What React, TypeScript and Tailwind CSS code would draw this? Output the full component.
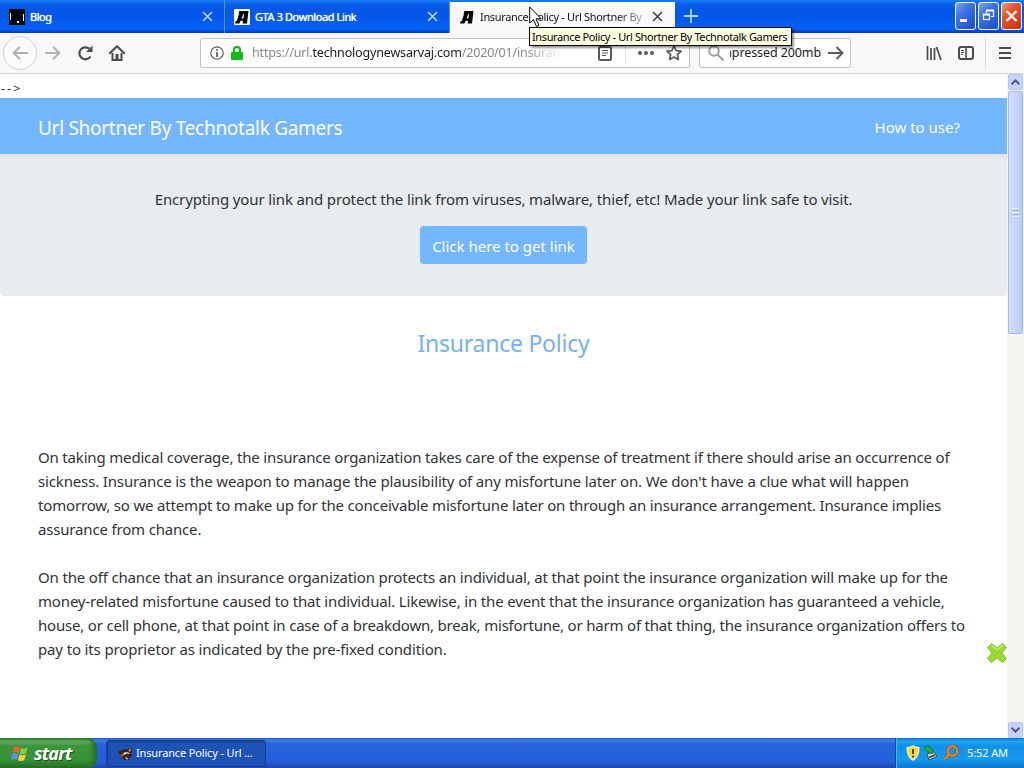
import React from 'react';

type TabProps = {
  title: string;
  icon: React.ReactNode;
  active?: boolean;
  titleClass?: string;
};

const CloseMark: React.FC<{ color: string }> = ({ color }) => (
  <svg width="11" height="11" viewBox="0 0 11 11" fill="none" stroke={color} strokeWidth="1.6">
    <path d="M1 1l9 9M10 1l-9 9" />
  </svg>
);

const BlogIcon = () => (
  <svg width="16" height="16" viewBox="0 0 16 16">
    <rect width="16" height="16" fill="#000" />
    <path d="M1.5 4v7M14.5 5v7" stroke="#fff" strokeWidth="1" />
    <rect x="8" y="12" width="2" height="2" fill="#fff" />
  </svg>
);

const LetterIcon: React.FC<{ boxed?: boolean }> = ({ boxed }) => (
  <svg width="16" height="16" viewBox="0 0 16 16">
    {boxed && <rect width="16" height="16" rx="1" fill="#fff" />}
    <path fillRule="evenodd" d="M5.500 2h9L13 14.500H8.700l.3-2.700H6.500L5.500 14.500H1l.8-2.500h1L5.200 4.500h-.7zM9.300 5L7.500 9.500h1.900l.6-4.500z" fill="#000" />
  </svg>
);

const Tab: React.FC<TabProps> = ({ title, icon, active, titleClass }) => (
  <div
    className={`flex items-center w-[225px] pl-[9px] pr-[11px] border-r ${
      active ? 'bg-[#f9f9fb] text-[#111] border-transparent mt-[2px] pb-[2px]' : 'text-white border-[#4d92f5] pt-[2px] pb-[2px]'
    }`}
  >
    {icon}
    <span className={`ml-[5px] flex-1 whitespace-nowrap text-[11px] leading-4 ${titleClass ?? ''}`}>{title}</span>
    <span className="ml-[10px]">
      <CloseMark color={active ? '#444' : '#b5dcff'} />
    </span>
  </div>
);

const TabStrip = () => (
  <div className="flex h-[33px] bg-[linear-gradient(180deg,#1c7bf2_0px,#0a63ee_4px,#0456e6_9px,#0559ec_20px,#0560f5_29px,#0049cf_31px,#003da8_33px)]">
    <Tab title="Blog" icon={<BlogIcon />} titleClass="tracking-[-0.5px] [text-shadow:0_0_1px_#fff]" />
    <Tab title="GTA 3 Download Link" icon={<LetterIcon boxed />} titleClass="tracking-[-0.4px] [text-shadow:0_0_1px_#fff]" />
    <Tab
      title="Insurance Policy - Url Shortner By"
      icon={<LetterIcon />}
      active
      titleClass="tracking-[-0.33px] [mask-image:linear-gradient(90deg,#000_84%,#0005)]"
    />
    <div className="flex flex-1 pl-[9px]">
      <svg className="mt-[9px]" width="14" height="14" viewBox="0 0 14 14" stroke="#a8d8ff" strokeWidth="1.8">
        <path d="M7 0v14M0 7h14" />
      </svg>
    </div>
    <div className="flex gap-[2px] pt-[2px] pr-[2px]">
      <WindowButton kind="min" />
      <WindowButton kind="restore" />
      <WindowButton kind="close" />
    </div>
  </div>
);

const WindowButton: React.FC<{ kind: 'min' | 'restore' | 'close' }> = ({ kind }) => (
  <button
    className={`flex h-7 w-[21px] items-center justify-center rounded-[3px] border border-white ${
      kind === 'close'
        ? 'bg-[linear-gradient(135deg,#f0a088,#e2552f_35%,#d8431c_70%,#b93510)]'
        : 'bg-[linear-gradient(135deg,#7fa5f5,#3f73e6_35%,#2a5ddd_70%,#1d49bd)]'
    }`}
  >
    <svg width="19" height="26" viewBox="0 0 19 26" fill="none" stroke="#fff">
      {kind === 'min' && <path d="M4 17.500h7" strokeWidth="3" />}
      {kind === 'restore' && (
        <>
          <path d="M7.500 10V7.500h7v6H12" strokeWidth="1.200" />
          <path d="M7 7.500h8" strokeWidth="2" />
          <rect x="4.500" y="11.500" width="6" height="5" strokeWidth="1.200" />
          <path d="M4 11.500h7" strokeWidth="2" />
        </>
      )}
      {kind === 'close' && <path d="M4.500 8l10 10M14.500 8l-10 10" strokeWidth="2.200" />}
    </svg>
  </button>
);

const Toolbar = () => (
  <div className="flex h-[41px] items-center border-b border-[#d6d6d8] bg-[#f8f8fa]">
    <div className="ml-[3px] flex size-[34px] items-center justify-center rounded-full border border-[#d0d0d2] bg-[#fbfbfc]">
      <svg width="16" height="14" viewBox="0 0 16 14" fill="none" stroke="#b0b0b0" strokeWidth="2">
        <path d="M16 7H1.500M8 .8L1.600 7 8 13.200" />
      </svg>
    </div>
    <svg className="ml-2" width="16" height="14" viewBox="0 0 16 14" fill="none" stroke="#b3b3b3" strokeWidth="2">
      <path d="M0 7h14.500M8 .8L14.400 7 8 13.200" />
    </svg>
    <svg className="ml-4" width="17" height="16" viewBox="0 0 17 16" fill="none" stroke="#4b4b4d" strokeWidth="2.200">
      <path d="M13.500 11.500A6 6 0 1 1 12.300 3.700" />
      <path d="M15.500 .5V7H9z" fill="#4b4b4d" stroke="none" />
    </svg>
    <svg className="ml-[15px]" width="16" height="16" viewBox="0 0 16 16">
      <path d="M.8 8.300L8 1.200l7.200 7.100" fill="none" stroke="#4b4b4d" strokeWidth="2" strokeLinecap="round" />
      <path d="M3.500 8v7h9V8" fill="none" stroke="#4b4b4d" strokeWidth="2" />
      <path d="M6.500 9h3v6h-3z" fill="#4b4b4d" />
    </svg>

    {/* Address bar */}
    <div className="ml-[75px] flex h-[30px] w-[490px] items-center rounded-[2px] border border-[#c3c3c5] bg-white pl-[9px]">
      <svg width="14" height="14" viewBox="0 0 14 14" fill="none" stroke="#5c5c5e">
        <circle cx="7" cy="7" r="6.200" strokeWidth="1.200" />
        <path d="M7 3v1.800M7 6v5" strokeWidth="1.700" />
      </svg>
      <svg className="ml-[7px]" width="12" height="14" viewBox="0 0 12 14">
        <path d="M3 7V4a3 3 0 0 1 6 0v3" fill="none" stroke="#12bc12" strokeWidth="2.200" />
        <rect y="6" width="12" height="8" rx="1" fill="#12bc12" />
      </svg>
      <div className="ml-[9px] w-[310px] pt-px whitespace-nowrap text-[12.500px] tracking-[-0.17px] text-[#88888a] [mask-image:linear-gradient(90deg,#000_88%,transparent)]">
        https://url.<span className="text-[#1a1a1a]">technologynewsarvaj.com</span>/2020/01/insuran
      </div>
      <svg className="ml-[36px]" width="14" height="15" viewBox="0 0 14 15" fill="none" stroke="#5a5a5c">
        <rect x="1" y="1" width="12" height="13" rx="1.500" strokeWidth="2" />
        <path d="M4 4.500h6M4 7h6M4 9.500h4" />
      </svg>
      <div className="ml-[13px] h-[22px] w-px bg-[#e4e4e6]" />
      <svg className="ml-[12px]" width="16" height="4" viewBox="0 0 16 4" fill="#5a5a5c">
        <circle cx="2" cy="2" r="2" />
        <circle cx="8" cy="2" r="2" />
        <circle cx="14" cy="2" r="2" />
      </svg>
      <svg className="ml-[12px]" width="16" height="16" viewBox="0 0 16 16" fill="none" stroke="#5a5a5c" strokeWidth="1.700" strokeLinejoin="round">
        <path d="M8 1l2.100 4.600 5 .5-3.700 3.400 1 4.900L8 12l-4.400 2.400 1-4.900L.9 6.100l5-.5z" />
      </svg>
    </div>

    {/* Search box */}
    <div className="ml-[9px] flex h-[30px] w-[152px] items-center rounded-[2px] border border-[#c3c3c5] bg-white pl-[8px]">
      <svg width="16" height="16" viewBox="0 0 16 16" fill="none" stroke="#a0a0a2" strokeWidth="2">
        <circle cx="6" cy="6" r="4.800" />
        <path d="M9.500 9.500l6 6" />
      </svg>
      <div className="ml-[6px] flex w-[91px] justify-end overflow-hidden pt-px whitespace-nowrap text-[12.500px] tracking-[-0.1px] text-[#1a1a1a]">mpressed 200mb</div>
      <svg className="ml-[7px]" width="16" height="14" viewBox="0 0 16 14" fill="none" stroke="#5c5c5e" strokeWidth="2">
        <path d="M0 7h14.500M8.500 1l6 6-6 6" />
      </svg>
    </div>

    <svg className="ml-[75px]" width="16" height="14" viewBox="0 0 16 14" fill="none" stroke="#4b4b4d" strokeWidth="2">
      <path d="M1.500 0v14M5 2v12M8.500 2v12M10.500 1l4.500 13" strokeWidth="1.700" />
    </svg>
    <svg className="ml-4" width="16" height="14" viewBox="0 0 16 14" fill="none" stroke="#4b4b4d">
      <rect x="1" y="1" width="14" height="12" rx="2" strokeWidth="2" />
      <path d="M8 1v12" strokeWidth="1.600" />
      <path d="M3 4.500h3M3 6.500h3M3 8.500h2" />
    </svg>
    <div className="ml-[11px] h-[34px] w-px bg-[#dededf]" />
    <svg className="ml-[13px]" width="12" height="12" viewBox="0 0 12 12" stroke="#4b4b4d" strokeWidth="2">
      <path d="M0 1h12M0 6h12M0 11h12" />
    </svg>
  </div>
);

const ScrollArrow: React.FC<{ down?: boolean }> = ({ down }) => (
  <div className="flex h-[16px] w-[15px] items-center justify-center rounded-[2px] border border-[#b4c8f6] bg-[#c6d4fc]">
    <svg width="9" height="6" viewBox="0 0 9 6" fill="none" stroke="#43568c" strokeWidth="2">
      <path d={down ? 'M.7 .8l3.800 3.800L8.300 .8' : 'M.7 5.200l3.800-3.800 3.800 3.800'} />
    </svg>
  </div>
);

const Scrollbar = () => (
  <div className="flex w-[17px] flex-col items-center bg-[#f6f6f1]">
    <ScrollArrow />
    <div className="mt-px flex h-[243px] w-[15px] flex-col items-center justify-center gap-px rounded-[2px] border border-[#a3b8ee] bg-[linear-gradient(90deg,#cfdcff,#c6d4fc_60%,#b9caf7)]">
      <i className="h-px w-[7px] bg-[#eef4fe]" />
      <i className="h-px w-[7px] bg-[#8cb0f8]" />
      <i className="h-px w-[7px] bg-[#eef4fe]" />
      <i className="h-px w-[7px] bg-[#8cb0f8]" />
      <i className="h-px w-[7px] bg-[#eef4fe]" />
    </div>
    <div className="flex-1" />
    <ScrollArrow down />
  </div>
);

const Page = () => (
  <div className="w-[1007px] bg-white text-[15px] leading-6 text-[#2f3337]">
    <div className="h-6 pt-[2px] pl-px text-[13px] tracking-[1.8px]">{'-->'}</div>
    <nav className="flex h-14 items-center justify-between bg-[#74b6ff] pr-[47px] pl-[38px] text-white">
      <span className="pt-[3px] text-[19px] tracking-[-0.28px] whitespace-nowrap">Url Shortner By Technotalk Gamers</span>
      <a href="#how" className="pt-[2px] whitespace-nowrap">How to use?</a>
    </nav>
    <section className="flex h-[142px] flex-col items-center rounded-b-[4px] bg-[#e8ecee] bg-[linear-gradient(180deg,#e2e3e6,#e8ecee_8px)] pt-[33px]">
      <p className="tracking-[-0.13px] whitespace-nowrap">Encrypting your link and protect the link from viruses, malware, thief, etc! Made your link safe to visit.</p>
      <button className="mt-[15px] h-[38px] w-[167px] rounded-[4px] bg-[#74b6ff] pt-[2px] whitespace-nowrap text-white">Click here to get link</button>
    </section>
    <h2 className="mt-[33px] text-center text-[23px] leading-[29px] tracking-[-0.25px] text-[#74b1f0]">Insurance Policy</h2>
    <article className="mt-[87px] ml-[38px] whitespace-nowrap">
      <p className="tracking-[-0.175px]">
        On taking medical coverage, the insurance organization takes care of the expense of treatment if there should arise an occurrence of
        <br />
        <span className="tracking-[-0.148px]">
          sickness. Insurance is the weapon to manage the plausibility of any misfortune later on. We don't have a clue what will happen
        </span>
        <br />
        tomorrow, so we attempt to make up for the conceivable misfortune later on through an insurance arrangement. Insurance implies
        <br />
        assurance from chance.
      </p>
      <p className="mt-6 tracking-[-0.165px]">
        On the off chance that an insurance organization protects an individual, at that point the insurance organization will make up for the
        <br />
        money-related misfortune caused to that individual. Likewise, in the event that the insurance organization has guaranteed a vehicle,
        <br />
        <span className="tracking-[-0.197px]">
          house, or cell phone, at that point in case of a breakdown, break, misfortune, or harm of that thing, the insurance organization offers to
        </span>
        <br />
        <span className="tracking-[-0.14px]">pay to its proprietor as indicated by the pre-fixed condition.</span>
      </p>
    </article>
  </div>
);

const Taskbar = () => (
  <div className="flex h-[30px] bg-[linear-gradient(180deg,#1f4fb8_0px,#3b80ee_2px,#2763dc_6px,#245edb_24px,#1b46a8_30px)] text-white">
    <button className="flex w-[97px] items-center rounded-r-[9px] bg-[linear-gradient(180deg,#2c7a2c_0px,#68b268_3px,#3c943c_8px,#379337_22px,#266f26_30px)] pl-[11px] shadow-[inset_-4px_0_5px_#266c26]">
      <svg width="18" height="17" viewBox="0 0 18 17">
        <path d="M3 2c2-1 4-1 6 .3L7.600 8C5.500 6.800 3.500 6.900 1.400 7.700z" fill="#f0602c" />
        <path d="M10 2.700c2 1.100 4.300 1.100 6.600.1L15 8.500c-2 .9-4.200.9-6.300-.1z" fill="#8acb43" />
        <path d="M1.200 8.800c2.100-.9 4-.9 6.100.3L5.800 15C4 13.800 2 13.900-.2 14.700z" fill="#5b91ef" />
        <path d="M8.400 9.500c2.100 1 4.200 1 6.300.1l-1.500 5.700c-2.100.9-4.200.9-6.200-.1z" fill="#fbd03c" />
      </svg>
      <span className="ml-[5px] text-[18px] leading-none font-bold italic tracking-[-0.8px] [text-shadow:1px_1px_1px_#1c4c1c]">start</span>
    </button>
    <div className="mt-[2px] ml-[9px] flex h-[27px] w-[160px] items-center rounded-[3px] border border-[#173f98] bg-[#1e52b7] pl-[11px] shadow-[inset_1px_1px_2px_#153e8e]">
      <svg width="16" height="14" viewBox="0 0 16 14">
        <path d="M0 4l4-.5L7 2l3 .5L13 0l1 4-1 3 2 2-3 1-1 3H7L4 11 3 8 0 6z" fill="#33231a" />
        <path d="M10.500 3L13 1v3l-2 1zM3 7l3 1-2 2z" fill="#e8762c" />
        <path d="M5 6l3-1 4 1-1 1-2-.5L6 8zM7 10l3 1-1 2z" fill="#f4d9ae" />
      </svg>
      <span className="ml-[2px] text-[11px] tracking-[-0.15px] whitespace-nowrap">Insurance Policy - Url ...</span>
    </div>
    <div className="flex-1" />
    <div className="flex w-[129px] items-center border-l border-[#0b4aa8] bg-[linear-gradient(180deg,#0d6ad0_0px,#1ba5f5_3px,#1290e8_8px,#129bf0_22px,#0f73c8_30px)] pl-[10px] shadow-[inset_1px_0_1px_#4cc0fb]">
      <svg width="14" height="16" viewBox="0 0 14 16">
        <path d="M7 .8c2 1.500 4 1.800 6 1.800 0 5.500-1 9.800-6 12.600C2 12.400 1 8.100 1 2.600c2 0 4-.3 6-1.800z" fill="#f7dc22" stroke="#e4e9da" strokeWidth="1.300" />
        <path d="M7 4v5M7 10.500v2" stroke="#222" strokeWidth="1.600" />
      </svg>
      <svg className="ml-[4px]" width="15" height="16" viewBox="0 0 15 16">
        <path d="M3 9l2 6 8-3.500L10 7z" fill="#c9d3d0" stroke="#36504c" />
        <path d="M5 12.500l6-2.500" stroke="#3b4444" strokeWidth="1.500" />
        <path d="M0 2.500L5 0v2l4 2-.5 4.500L5 7v2z" fill="#23a83c" stroke="#126d2b" strokeWidth=".7" />
      </svg>
      <svg className="ml-[4px]" width="16" height="16" viewBox="0 0 16 16" fill="none">
        <circle cx="9.500" cy="6" r="4.700" stroke="#a74b0b" strokeWidth="3" />
        <path d="M6 9.500L1.500 14" stroke="#a74b0b" strokeWidth="3.400" />
        <circle cx="9.500" cy="6" r="4.700" stroke="#f0862a" strokeWidth="2" />
        <path d="M6 9.500L1.500 14" stroke="#f0862a" strokeWidth="2" />
      </svg>
      <span className="ml-[8px] text-[11px] tracking-[-0.1px] whitespace-nowrap">5:52 AM</span>
    </div>
  </div>
);

const App: React.FC = () => (
  <div className="relative flex h-[768px] w-[1024px] flex-col overflow-hidden bg-white font-['Noto_Sans',sans-serif]">
    <TabStrip />
    <Toolbar />
    <main className="flex min-h-0 flex-1">
      <Page />
      <Scrollbar />
    </main>
    <Taskbar />

    {/* Floating close badge */}
    <svg className="absolute top-[642px] left-[986px]" width="22" height="22" viewBox="0 0 22 22">
      <path d="M5.500 1.500L11 6l5.500-4.500 4 4L16 11l4.500 5.500-4 4L11 16l-5.500 4.500-4-4L6 11 1.500 5.500z" fill="#9bd834" stroke="#82c52e" strokeLinejoin="round" />
      <path d="M5.500 3.500L11 8l5.500-4.500" fill="none" stroke="#c4ec7a" strokeWidth="1.500" />
    </svg>

    {/* Tab tooltip and pointer */}
    <div className="absolute top-[27px] left-[529px] h-[19px] w-[263px] border border-black bg-[#ffffe1] pl-[2px] text-[11px] leading-[18px] tracking-[-0.38px] whitespace-nowrap text-black shadow-[2px_2px_2px_rgba(0,0,0,0.4)]">
      Insurance Policy - Url Shortner By Technotalk Gamers
    </div>
    <svg className="absolute top-[6px] left-[529px]" width="14" height="22" viewBox="0 0 14 22">
      <path d="M.7 1v16l3.800-3.500 3 7 2.500-1-3-6.700h5.200z" fill="#fff" stroke="#000" />
    </svg>
  </div>
);

export default App;
